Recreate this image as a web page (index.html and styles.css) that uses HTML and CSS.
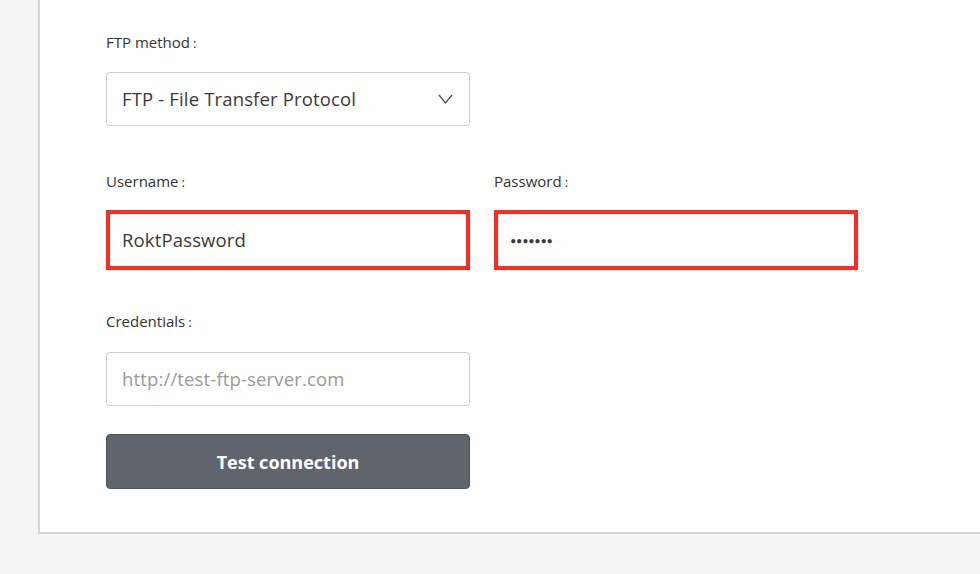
FILE: index.html
```html
<!DOCTYPE html>
<html lang="en">
<head>
<meta charset="utf-8">
<title>FTP settings</title>
<link rel="stylesheet" href="styles.css">
</head>
<body>
<div class="page">
  <div class="card">
    <form class="form">
      <div class="row">
        <div class="field">
          <label class="label">FTP method<span class="colon">:</span></label>
          <div class="select">
            <span class="select-value">FTP - File Transfer Protocol</span>
            <svg class="chevron" width="15" height="10" viewBox="0 0 15 10" aria-hidden="true">
              <polyline points="1,1 7.5,9 14,1" fill="none" stroke="#555" stroke-width="1.3"/>
            </svg>
          </div>
        </div>
      </div>
      <div class="row row-2">
        <div class="field">
          <label class="label">Username<span class="colon">:</span></label>
          <div class="input input-highlight"><span class="input-text">RoktPassword</span></div>
        </div>
        <div class="field">
          <label class="label">Password<span class="colon">:</span></label>
          <div class="input input-highlight"><span class="input-dots">•••••••</span></div>
        </div>
      </div>
      <div class="row row-3">
        <div class="field field-3">
          <label class="label">Credentials<span class="colon">:</span></label>
          <div class="input"><span class="input-placeholder">http://test-ftp-server.com</span></div>
        </div>
      </div>
      <div class="row row-btn">
        <button type="button" class="button">Test connection</button>
      </div>
    </form>
  </div>
</div>
</body>
</html>
```
FILE: styles.css
```css
* { box-sizing: border-box; }
html, body { margin: 0; padding: 0; }
body {
  background: #f4f4f4;
  font-family: "Open Sans", "Lato", "Liberation Sans", sans-serif;
  color: #333;
  width: 980px;
  height: 574px;
  overflow: hidden;
}
.page {
  padding-left: 38px;
}
.card {
  background: #fff;
  border-left: 2px solid #d4d4d4;
  border-bottom: 2px solid #d4d4d4;
  padding: 32px 0 42px 66px;
  height: 534px;
}
.form {
  display: flex;
  flex-direction: column;
}
.row {
  display: grid;
  grid-template-columns: 364px 364px;
  column-gap: 24px;
}
.row-2 { margin-top: 45px; }
.row-3 { margin-top: 46px; }
.row-btn { margin-top: 28px; }
.field {
  display: flex;
  flex-direction: column;
  gap: 20px;
}
.field-3 { gap: 21px; }
.label {
  font-size: 15px;
  line-height: 20px;
  height: 20px;
  color: #333;
}
.colon {
  margin-left: 3px;
  font-size: 13px;
}
.select, .input {
  height: 54px;
  border: 1px solid #cfcfcf;
  border-radius: 4px;
  background: #fff;
  display: flex;
  align-items: center;
  padding: 0 16px 0 15px;
  font-size: 18.5px;
  letter-spacing: 0.15px;
  color: #3a3a3a;
}
.select-value, .input-text, .input-placeholder {
  padding-bottom: 2px;
}
.select {
  justify-content: space-between;
}
.chevron {
  display: block;
}
.input-highlight {
  border: 4px solid #ff2b22;
  border-radius: 0;
  height: 60px;
  margin-top: -1px;
  margin-bottom: -5px;
  padding-left: 12px;
}
.input-dots {
  font-family: "Lato", sans-serif;
  font-size: 11px;
  letter-spacing: -0.3px;
  color: #3a3a3a;
}
.input-placeholder {
  color: #9a9a9a;
}
.button {
  height: 55px;
  border: 1px solid #50555c;
  border-radius: 4px;
  background: #5f656d;
  color: #fff;
  font-family: "Open Sans", "Lato", "Liberation Sans", sans-serif;
  font-size: 18px;
  font-weight: 700;
  cursor: pointer;
}
```
